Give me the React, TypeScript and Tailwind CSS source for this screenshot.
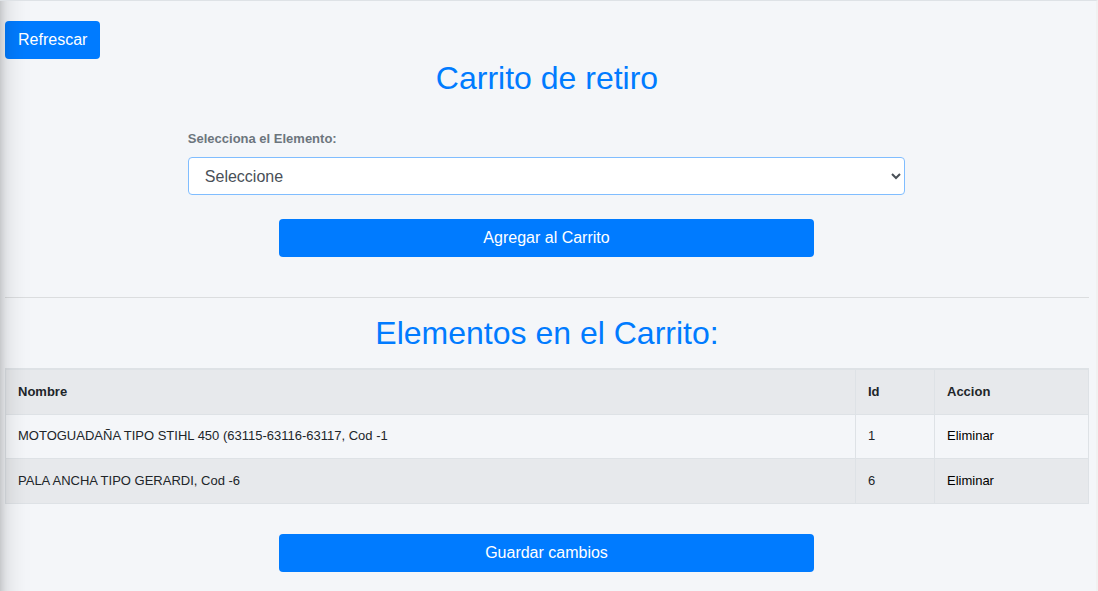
import { useState } from "react";

type Item = { id: number; name: string };

const initialItems: Item[] = [
  { id: 1, name: "MOTOGUADAÑA TIPO STIHL 450 (63115-63116-63117, Cod -1" },
  { id: 6, name: "PALA ANCHA TIPO GERARDI, Cod -6" },
];

const button =
  "h-[38px] cursor-pointer rounded bg-[#007bff] px-[13px] text-base text-white hover:bg-[#0069d9]";
const cell = "border border-[#dee2e6] px-3 text-left";

export default function App() {
  const [items, setItems] = useState(initialItems);

  return (
    <div className="relative min-h-screen overflow-hidden border-t border-r-2 border-t-[#dee2e6] border-r-[#f1f1f1] bg-[#f4f6f9] font-['Liberation_Sans',Arial,sans-serif] text-[#212529]">
      {/* Shadow cast by the side menu */}
      <div
        aria-hidden="true"
        className="pointer-events-none absolute -inset-y-12 right-full z-10 mr-0.5 w-64 shadow-[0_14px_28px_rgba(0,0,0,0.25),0_10px_10px_rgba(0,0,0,0.22)]"
      />
      <main className="pt-5 pr-[7px] pb-4 pl-[5px]">
        <button type="button" className={`${button} block`}>
          Refrescar
        </button>
        <h1 className="text-center text-[32px] leading-[38px] text-[#007bff]">Carrito de retiro</h1>

        <form
          className="-mr-[6px] -ml-[7px] mt-8 flex flex-col items-center"
          onSubmit={(e) => e.preventDefault()}
        >
          <div className="w-2/3 px-[7px]">
            <label htmlFor="elemento" className="mb-2 block text-[13px] leading-5 font-bold text-[#6c757d]">
              Selecciona el Elemento:
            </label>
            <select
              id="elemento"
              className="block h-[38px] w-full rounded border border-[#80bdff] bg-white px-3 text-base text-[#495057] outline-none"
            >
              <option>Seleccione</option>
              {initialItems.map((item) => (
                <option key={item.id} value={item.id}>
                  {item.name}
                </option>
              ))}
            </select>
          </div>
          <div className="mt-6 w-1/2 px-[7px]">
            <button type="submit" className={`${button} block w-full`}>
              Agregar al Carrito
            </button>
          </div>
        </form>

        <hr className="mt-10 mb-4 border-black/10" />

        <h2 className="text-center text-[32px] leading-[38px] text-[#007bff]">Elementos en el Carrito:</h2>
        <table className="mt-4 w-full border-collapse text-[13px] leading-5">
          <thead>
            <tr className="h-[45px] bg-black/5">
              <th className={`${cell} border-t-2`}>Nombre</th>
              <th className={`${cell} w-[79px] border-t-2`}>Id</th>
              <th className={`${cell} w-[154px] border-t-2`}>Accion</th>
            </tr>
          </thead>
          <tbody>
            {items.map((item) => (
              <tr key={item.id} className="h-11 last:h-[45px] even:bg-black/5">
                <td className={cell}>{item.name}</td>
                <td className={cell}>{item.id}</td>
                <td className={cell}>
                  <button
                    type="button"
                    className="cursor-pointer text-black"
                    onClick={() => setItems(items.filter((other) => other.id !== item.id))}
                  >
                    Eliminar
                  </button>
                </td>
              </tr>
            ))}
          </tbody>
        </table>

        <div className="-mr-[6px] -ml-[7px] mt-[30px] flex justify-center">
          <div className="w-1/2 px-[7px]">
            <button type="button" className={`${button} block w-full`}>
              Guardar cambios
            </button>
          </div>
        </div>
      </main>
    </div>
  );
}
